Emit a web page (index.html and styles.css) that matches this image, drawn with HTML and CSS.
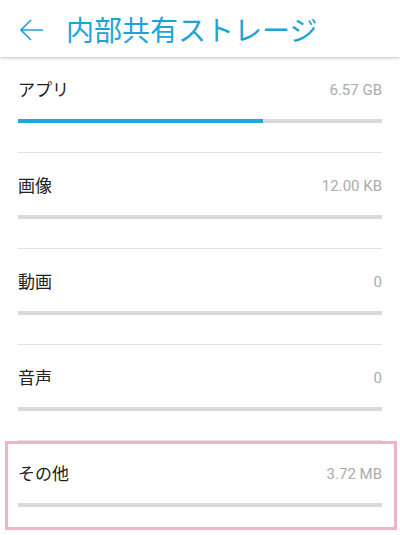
FILE: index.html
```html
<!DOCTYPE html>
<html lang="ja">
<head>
    <meta charset="UTF-8">
    <meta name="viewport" content="width=device-width, initial-scale=1.0">
    <title>内部共有ストレージ</title>
    <link rel="stylesheet" href="styles.css">
</head>
<body>
    <div id="header">
        <svg class="back" width="24" height="24" viewBox="0 0 24 24">
            <path d="M1 12 H23 M11 2 L1 12 L11 22" fill="none" stroke="#1ea3d8" stroke-width="1.6"/>
        </svg>
        <div class="title">内部共有ストレージ</div>
    </div>

    <div id="list">
        <div class="row">
            <div class="line"><span class="label">アプリ</span><span class="value">6.57 GB</span></div>
            <div class="bar"><div class="fill" style="width: 67.3%"></div></div>
        </div>
        <div class="row">
            <div class="line"><span class="label">画像</span><span class="value">12.00 KB</span></div>
            <div class="bar"></div>
        </div>
        <div class="row">
            <div class="line"><span class="label">動画</span><span class="value">0</span></div>
            <div class="bar"></div>
        </div>
        <div class="row">
            <div class="line"><span class="label">音声</span><span class="value">0</span></div>
            <div class="bar"></div>
        </div>
        <div class="row marked">
            <div class="line"><span class="label">その他</span><span class="value">3.72 MB</span></div>
            <div class="bar"></div>
        </div>
    </div>
</body>
</html>
```

FILE: styles.css
```css
body {
    margin: 0;
    font-family: Roboto, "Noto Sans CJK JP", sans-serif;
    background-color: #fff;
    overflow: hidden;
}

#header {
    height: 57px;
    display: flex;
    align-items: center;
    padding-left: 20px;
    box-shadow: 0 1px 3px rgba(0, 0, 0, 0.25);
    position: relative;
}

.back {
    margin-top: 2px;
}

.title {
    margin-left: 22px;
    font-size: 28px;
    color: #1ea3d8;
}

#list {
    padding: 0 18px;
}

.row {
    padding: 21px 0 29px;
    border-bottom: 1px solid #e0e0e0;
    position: relative;
}

.line {
    display: flex;
    justify-content: space-between;
    align-items: center;
    height: 20px;
}

.label {
    font-size: 17px;
    color: #212121;
}

.value {
    font-size: 15px;
    color: #ababab;
    margin-top: 3px;
}

.bar {
    margin-top: 21px;
    height: 4px;
    background-color: #d9d9d9;
}

.fill {
    height: 100%;
    background-color: #1ea8de;
}

.row.marked::after {
    content: "";
    position: absolute;
    top: 0;
    left: -13px;
    right: -15px;
    height: 83px;
    border: 3px solid #f3b2cc;
}
```
